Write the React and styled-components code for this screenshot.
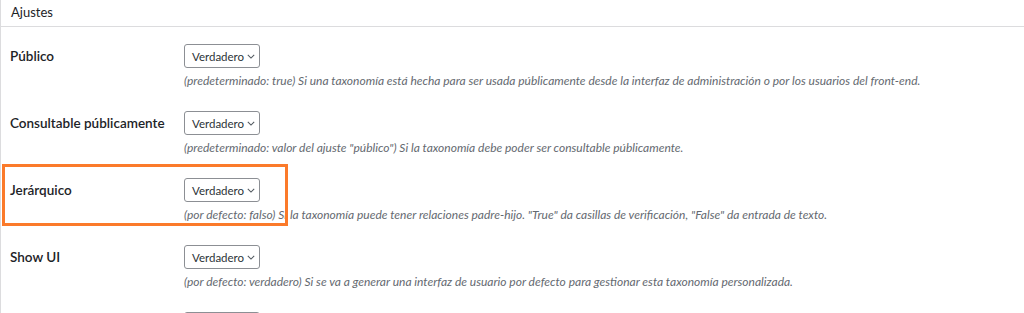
import React from "react";
import styled, { createGlobalStyle } from "styled-components";

const GlobalStyle = createGlobalStyle`
  body {
    margin: 0;
    background: #fff;
    font-family: Lato, "Noto Sans", sans-serif;
    color: #1d2327;
  }
`;

const settings = [
  {
    id: "public",
    label: "Público",
    value: "Verdadero",
    help: "(predeterminado: true) Si una taxonomía está hecha para ser usada públicamente desde la interfaz de administración o por los usuarios del front-end.",
  },
  {
    id: "queryable",
    label: "Consultable públicamente",
    value: "Verdadero",
    help: "(predeterminado: valor del ajuste \"público\") Si la taxonomía debe poder ser consultable públicamente.",
  },
  {
    id: "hierarchical",
    label: "Jerárquico",
    value: "Verdadero",
    help: "(por defecto: falso) Si la taxonomía puede tener relaciones padre-hijo. \"True\" da casillas de verificación, \"False\" da entrada de texto.",
    highlight: true,
  },
  {
    id: "show_ui",
    label: "Show UI",
    value: "Verdadero",
    help: "(por defecto: verdadero) Si se va a generar una interfaz de usuario por defecto para gestionar esta taxonomía personalizada.",
  },
  {
    id: "show_in_menu",
    label: "",
    value: "Verdadero",
    help: "",
  },
];

export default function App() {
  return (
    <>
      <GlobalStyle />
      <Panel>
        <PanelHeader>Ajustes</PanelHeader>
        <Rows>
          {settings.map((s) => (
            <Row key={s.id}>
              <Label htmlFor={s.id}>{s.label}</Label>
              <Field>
                <SelectBox id={s.id}>
                  <span>{s.value}</span>
                  <Chevron viewBox="0 0 10 6" aria-hidden="true">
                    <path d="M1 1l4 4 4-4" />
                  </Chevron>
                </SelectBox>
                {s.help && <Help>{s.help}</Help>}
              </Field>
              {s.highlight && <Highlight />}
            </Row>
          ))}
        </Rows>
      </Panel>
    </>
  );
}

const Panel = styled.div`
  border-left: 1px solid #dcdcde;
  height: 313px;
  overflow: hidden;
`;

const PanelHeader = styled.div`
  height: 27px;
  padding: 4px 10px 0 10px;
  box-sizing: border-box;
  font-size: 13px;
  line-height: 16px;
  border-bottom: 1px solid #dcdcde;
`;

const Rows = styled.div`
  display: flex;
  flex-direction: column;
`;

const Row = styled.div`
  position: relative;
  display: grid;
  grid-template-columns: 174px 1fr;
  padding: 17px 10px 5px 9px;
  height: 67px;
  box-sizing: border-box;
`;

const Label = styled.label`
  font-size: 13.5px;
  font-weight: 600;
  line-height: 24px;
  color: #1d2327;
`;

const Field = styled.div`
  display: flex;
  flex-direction: column;
  align-items: flex-start;
  gap: 5px;
`;

const SelectBox = styled.div`
  display: flex;
  align-items: center;
  gap: 3px;
  width: 76px;
  height: 24px;
  box-sizing: border-box;
  padding: 0 6px 0 7px;
  border: 1px solid #8c8f94;
  border-radius: 3px;
  font-size: 11.5px;
  color: #2c3338;
  background: #fff;
`;

const Chevron = styled.svg`
  width: 8px;
  height: 5px;
  flex-shrink: 0;
  fill: none;
  stroke: #50575e;
  stroke-width: 1.3;
`;

const Help = styled.p`
  margin: 0;
  font-size: 12px;
  font-style: italic;
  line-height: 16px;
  color: #646970;
  white-space: nowrap;
`;

const Highlight = styled.div`
  position: absolute;
  left: 1px;
  top: 3px;
  width: 286px;
  height: 62px;
  border: 3px solid #fb7a2a;
  box-sizing: border-box;
  pointer-events: none;
`;
